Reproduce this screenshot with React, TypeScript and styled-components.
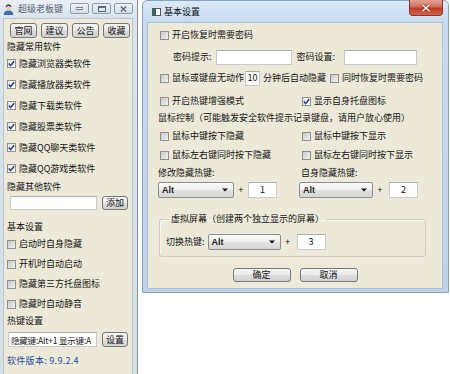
import React from 'react'
import styled, {createGlobalStyle} from 'styled-components'

const GlobalStyle = createGlobalStyle`
  html, body {
    margin: 0;
    padding: 0;
    background: #fff;
    overflow: hidden;
  }
  body {
    font-family: "Noto Sans CJK SC", "Noto Sans", sans-serif;
    font-size: 9px;
    line-height: 12px;
    color: #141414;
  }
`

const Desktop = styled.div`
  display: flex;
  align-items: flex-start;
  gap: 4px;
  width: 450px;
  height: 374px;
  overflow: hidden;
`

/* ---------- left window ---------- */

const LeftWindow = styled.div`
  flex: none;
  width: 138px;
  height: 392px;
  box-sizing: border-box;
  border-right: 1px solid #8c939b;
  background: linear-gradient(#e9eff5, #dae3ec 18px, #d6dfe8);
  padding: 0 4px 0 3px;
  display: flex;
  flex-direction: column;
`

const LeftTitle = styled.div`
  height: 18px;
  display: flex;
  align-items: center;
  gap: 4px;
`

const LeftTitleText = styled.span`
  color: #5a6169;
  flex: 1;
`

const CaptionButtons = styled.div`
  display: flex;
  gap: 3px;
  align-self: flex-start;
  margin-top: 3px;
`

const CaptionButton = styled.span`
  width: 19px;
  height: 11px;
  box-sizing: border-box;
  border: 1px solid #8f9cab;
  border-radius: 2px;
  background: linear-gradient(#eef2f6, #d4dce5);
  display: flex;
  align-items: center;
  justify-content: center;
`

const LeftContent = styled.div`
  flex: 1;
  background: #ece9d8;
  border: 1px solid #bcc6d0;
  border-bottom: none;
  padding: 4px 0 0 3px;
  display: flex;
  flex-direction: column;
`

const TopButtons = styled.div`
  display: flex;
  gap: 4px;
  margin-left: 3px;
`

const Heading = styled.div<{$mt: number}>`
  height: 12px;
  margin-top: ${p => p.$mt}px;
`

const CheckRow = styled.div<{$h: number; $mt?: number}>`
  height: ${p => p.$h}px;
  margin-top: ${p => p.$mt || 0}px;
  display: flex;
  align-items: center;
  gap: 3px;
  white-space: nowrap;
`

const BoxMark = styled.span<{$on?: boolean}>`
  flex: none;
  width: 9px;
  height: 9px;
  box-sizing: border-box;
  border: 1px solid #8e8f8f;
  background: ${p =>
    p.$on
      ? 'linear-gradient(135deg, #e4e4e4, #ffffff)'
      : 'linear-gradient(135deg, #c9c9c9, #f2f2f2)'};
  display: flex;
  align-items: center;
  justify-content: center;
`

const ToolRow = styled.div<{$mt: number; $h: number; $ml: number}>`
  display: flex;
  align-items: center;
  gap: 5px;
  height: ${p => p.$h}px;
  margin-top: ${p => p.$mt}px;
  margin-left: ${p => p.$ml}px;
`

const Field = styled.div<{$w: number; $h?: number; $center?: boolean}>`
  flex: none;
  width: ${p => p.$w}px;
  height: ${p => p.$h || 15}px;
  box-sizing: border-box;
  background: #fff;
  border: 1px solid #c7c9cc;
  border-top-color: #abadb3;
  display: flex;
  align-items: center;
  justify-content: ${p => (p.$center ? 'center' : 'flex-start')};
  padding: 0 2px;
  overflow: hidden;
  white-space: nowrap;
  font-size: 9px;
`

const HotkeyText = styled.span`
  font-size: 8.5px;
  letter-spacing: -0.2px;
`

const Btn = styled.span<{$w: number; $h?: number}>`
  flex: none;
  width: ${p => p.$w}px;
  height: ${p => p.$h || 15}px;
  box-sizing: border-box;
  border: 1px solid #777;
  border-radius: 3px;
  background: linear-gradient(#f6f6f6, #ebebeb 48%, #dddddd 52%, #d2d2d2);
  display: flex;
  align-items: center;
  justify-content: center;
`

const Version = styled.div`
  margin-top: 8px;
  height: 12px;
  color: #2648a8;
  letter-spacing: 0.3px;
`

/* ---------- dialog ---------- */

const Dialog = styled.div`
  flex: none;
  width: 307px;
  height: 293px;
  box-sizing: border-box;
  border: 1px solid #86a3c3;
  border-radius: 5px 5px 0 0;
  background: linear-gradient(#dce9f7, #c6dbf0 21px, #bdd3ea);
  padding: 0 5px 3px 4px;
  display: flex;
  flex-direction: column;
`

const DialogTitle = styled.div`
  height: 21px;
  display: flex;
  align-items: center;
  gap: 3px;
  padding-left: 5px;
`

const DialogTitleText = styled.span`
  flex: 1;
  color: #111;
`

const CloseButton = styled.span`
  align-self: flex-start;
  margin-top: -1px;
  width: 34px;
  height: 16px;
  box-sizing: border-box;
  border: 1px solid #8a3426;
  border-top: none;
  border-radius: 0 0 4px 4px;
  background: linear-gradient(#e6a296, #d0705e 45%, #bf3a24 55%, #d3654c);
  display: flex;
  align-items: center;
  justify-content: center;
`

const DialogBody = styled.div`
  flex: 1;
  background: #ece9d8;
  border: 1px solid #aebfd2;
  padding: 4px 0 0 10px;
  display: flex;
  flex-direction: column;
`

const Line = styled.div<{$mt: number; $indent?: number}>`
  height: 16px;
  margin-top: ${p => p.$mt}px;
  margin-left: ${p => p.$indent || 0}px;
  display: flex;
  align-items: center;
  white-space: nowrap;
`

const Col = styled.div<{$w?: number; $indent?: number}>`
  flex: none;
  width: ${p => (p.$w ? `${p.$w}px` : 'auto')};
  margin-left: ${p => p.$indent || 0}px;
  display: flex;
  align-items: center;
  gap: 3px;
`

const Label = styled.span<{$ml?: number; $mr?: number}>`
  margin-left: ${p => p.$ml || 0}px;
  margin-right: ${p => p.$mr || 0}px;
`

const Combo = styled.div<{$w: number}>`
  flex: none;
  width: ${p => p.$w}px;
  height: 16px;
  box-sizing: border-box;
  border: 1px solid #8d8d8d;
  border-radius: 2px;
  background: linear-gradient(#fbfbfb, #efefef 50%, #e1e1e1 50%, #d6d6d6);
  display: flex;
  align-items: center;
  padding: 0 5px 0 3px;
  font-family: "Liberation Sans", "Noto Sans", sans-serif;
  font-size: 9px;
  font-weight: bold;
  color: #222;
`

const ComboText = styled.span`
  flex: 1;
`

const Plus = styled.span<{$ml?: number}>`
  flex: none;
  width: 14px;
  margin-left: ${p => p.$ml || 0}px;
  text-align: center;
  font-family: "Liberation Sans", sans-serif;
  font-size: 9px;
`

const NumberField = styled(Field)<{$ml?: number}>`
  margin-left: ${p => p.$ml || 0}px;
`

const GroupBox = styled.fieldset`
  margin: 15px 0 0 1px;
  width: 267px;
  box-sizing: border-box;
  border: 1px solid #cfccbd;
  border-radius: 3px;
  box-shadow: inset 1px 1px 0 #f8f7f0;
  padding: 9px 0 6px 6px;
`

const Legend = styled.legend`
  margin-left: 3px;
  padding: 0 2px;
  line-height: 12px;
`

const GroupRow = styled.div`
  height: 16px;
  display: flex;
  align-items: center;
`

const Footer = styled.div`
  margin-top: 11px;
  margin-left: -10px;
  display: flex;
  justify-content: center;
  gap: 9px;
`

function CheckBox({on}: {on?: boolean}) {
  return (
    <BoxMark $on={on}>
      {on && (
        <svg width="7" height="7" viewBox="0 0 7 7">
          <path d="M0.8 3.6 L2.6 5.6 L6.2 1.2" fill="none" stroke="#1f3a8e" strokeWidth="1.5" />
        </svg>
      )}
    </BoxMark>
  )
}

function Arrow() {
  return (
    <svg width="6" height="4" viewBox="0 0 6 4">
      <path d="M0 0.5 H6 L3 3.6 Z" fill="#111" />
    </svg>
  )
}

function UserIcon() {
  return (
    <svg width="11" height="11" viewBox="0 0 11 11">
      <path d="M0.8 11 C0.8 7.6 2.8 6.6 5.5 6.6 C8.2 6.6 10.2 7.6 10.2 11 Z" fill="#3d6fb0" />
      <circle cx="5.5" cy="3.6" r="2.7" fill="#f1cfa9" />
      <path d="M2.7 3.4 C2.7 1.2 4 0.5 5.5 0.5 C7 0.5 8.3 1.2 8.3 3.4 C7.4 2.3 6 2.1 5.5 2.1 C5 2.1 3.6 2.3 2.7 3.4 Z" fill="#1f2d44" />
    </svg>
  )
}

function WindowIcon() {
  return (
    <svg width="9" height="8" viewBox="0 0 9 8">
      <rect x="0.5" y="0.5" width="8" height="7" fill="#fff" stroke="#4d5a55" />
      <rect x="1" y="1" width="3" height="6" fill="#2e6b52" />
    </svg>
  )
}

const leftApps = [
  '隐藏浏览器类软件',
  '隐藏播放器类软件',
  '隐藏下载类软件',
  '隐藏股票类软件',
  '隐藏QQ聊天类软件',
  '隐藏QQ游戏类软件',
]

const leftBasics = ['启动时自身隐藏', '开机时自动启动', '隐藏第三方托盘图标', '隐藏时自动静音']

export default function App() {
  return (
    <Desktop>
      <GlobalStyle />

      <LeftWindow>
        <LeftTitle>
          <UserIcon />
          <LeftTitleText>超级老板键</LeftTitleText>
          <CaptionButtons>
            <CaptionButton>
              <svg width="7" height="3" viewBox="0 0 7 3">
                <rect x="0" y="0.5" width="7" height="2" fill="#fff" stroke="#5d6875" strokeWidth="0.8" />
              </svg>
            </CaptionButton>
            <CaptionButton>
              <svg width="8" height="6" viewBox="0 0 8 6">
                <rect x="0.5" y="0.5" width="7" height="5" fill="none" stroke="#5d6875" />
                <rect x="0.5" y="0.5" width="7" height="1.5" fill="#5d6875" />
              </svg>
            </CaptionButton>
            <CaptionButton>
              <svg width="7" height="6" viewBox="0 0 7 6">
                <path d="M0.8 0.5 L6.2 5.5 M6.2 0.5 L0.8 5.5" stroke="#5d6875" strokeWidth="1.3" />
              </svg>
            </CaptionButton>
          </CaptionButtons>
        </LeftTitle>

        <LeftContent>
          <TopButtons>
            <Btn $w={27}>官网</Btn>
            <Btn $w={27}>建议</Btn>
            <Btn $w={27}>公告</Btn>
            <Btn $w={27}>收藏</Btn>
          </TopButtons>

          <Heading $mt={3}>隐藏常用软件</Heading>
          {leftApps.map(name => (
            <CheckRow key={name} $h={21}>
              <CheckBox on />
              <span>{name}</span>
            </CheckRow>
          ))}

          <Heading $mt={2}>隐藏其他软件</Heading>
          <ToolRow $mt={3} $h={14} $ml={3}>
            <Field $w={87} $h={14} />
            <Btn $w={26} $h={14}>添加</Btn>
          </ToolRow>

          <Heading $mt={11}>基本设置</Heading>
          {leftBasics.map((name, i) => (
            <CheckRow key={name} $h={20} $mt={i === 0 ? 1 : 0}>
              <CheckBox />
              <span>{name}</span>
            </CheckRow>
          ))}

          <Heading $mt={1}>热键设置</Heading>
          <ToolRow $mt={5} $h={15} $ml={1}>
            <Field $w={89}>
              <HotkeyText>隐藏键:Alt+1 显示键:A</HotkeyText>
            </Field>
            <Btn $w={26}>设置</Btn>
          </ToolRow>

          <Version>软件版本: 9.9.2.4</Version>
        </LeftContent>
      </LeftWindow>

      <Dialog>
        <DialogTitle>
          <WindowIcon />
          <DialogTitleText>基本设置</DialogTitleText>
          <CloseButton>
            <svg width="10" height="8" viewBox="0 0 10 8">
              <path d="M1.5 0.8 L8.5 7.2 M8.5 0.8 L1.5 7.2" stroke="#6b2418" strokeWidth="2.6" />
              <path d="M1.5 0.8 L8.5 7.2 M8.5 0.8 L1.5 7.2" stroke="#fff" strokeWidth="1.5" />
            </svg>
          </CloseButton>
        </DialogTitle>

        <DialogBody>
          <Line $mt={0} $indent={2}>
            <Col>
              <CheckBox />
              <span>开启恢复时需要密码</span>
            </Col>
          </Line>

          <Line $mt={6} $indent={15}>
            <Label $mr={4}>密码提示:</Label>
            <Field $w={76}></Field>
            <Label $ml={5} $mr={9}>密码设置:</Label>
            <Field $w={73}></Field>
          </Line>

          <Line $mt={5} $indent={2}>
            <Col>
              <CheckBox />
              <span>鼠标或键盘无动作</span>
            </Col>
            <NumberField $w={15} $center $ml={1}>10</NumberField>
            <Label $ml={3} $mr={4}>分钟后自动隐藏</Label>
            <Col>
              <CheckBox />
              <span>同时恢复时需要密码</span>
            </Col>
          </Line>

          <Line $mt={7}>
            <Col $w={141} $indent={2}>
              <CheckBox />
              <span>开启热键增强模式</span>
            </Col>
            <Col $indent={1}>
              <CheckBox on />
              <span>显示自身托盘图标</span>
            </Col>
          </Line>

          <Line $mt={1}>
            <span>鼠标控制（可能触发安全软件提示记录键盘，请用户放心使用）</span>
          </Line>

          <Line $mt={2}>
            <Col $w={141} $indent={2}>
              <CheckBox />
              <span>鼠标中键按下隐藏</span>
            </Col>
            <Col $indent={1}>
              <CheckBox />
              <span>鼠标中键按下显示</span>
            </Col>
          </Line>

          <Line $mt={3}>
            <Col $w={141} $indent={2}>
              <CheckBox />
              <span>鼠标左右键同时按下隐藏</span>
            </Col>
            <Col $indent={1}>
              <CheckBox />
              <span>鼠标左右键同时按下显示</span>
            </Col>
          </Line>

          <Line $mt={2}>
            <Col $w={143}>
              <span>修改隐藏热键:</span>
            </Col>
            <span>自身隐藏热键:</span>
          </Line>

          <Line $mt={1}>
            <Col $w={141}>
              <Combo $w={76}>
                <ComboText>Alt</ComboText>
                <Arrow />
              </Combo>
              <Plus $ml={-3}>+</Plus>
              <NumberField $w={29} $h={16} $center $ml={-3}>1</NumberField>
            </Col>
            <Combo $w={74}>
              <ComboText>Alt</ComboText>
              <Arrow />
            </Combo>
            <Plus>+</Plus>
            <NumberField $w={29} $h={16} $center $ml={2}>2</NumberField>
          </Line>

          <GroupBox>
            <Legend>虚拟屏幕（创建两个独立显示的屏幕）</Legend>
            <GroupRow>
              <Label $mr={3}>切换热键:</Label>
              <Combo $w={73}>
                <ComboText>Alt</ComboText>
                <Arrow />
              </Combo>
              <Plus>+</Plus>
              <NumberField $w={29} $h={16} $center $ml={2}>3</NumberField>
            </GroupRow>
          </GroupBox>

          <Footer>
            <Btn $w={58} $h={14}>确定</Btn>
            <Btn $w={58} $h={14}>取消</Btn>
          </Footer>
        </DialogBody>
      </Dialog>
    </Desktop>
  )
}
